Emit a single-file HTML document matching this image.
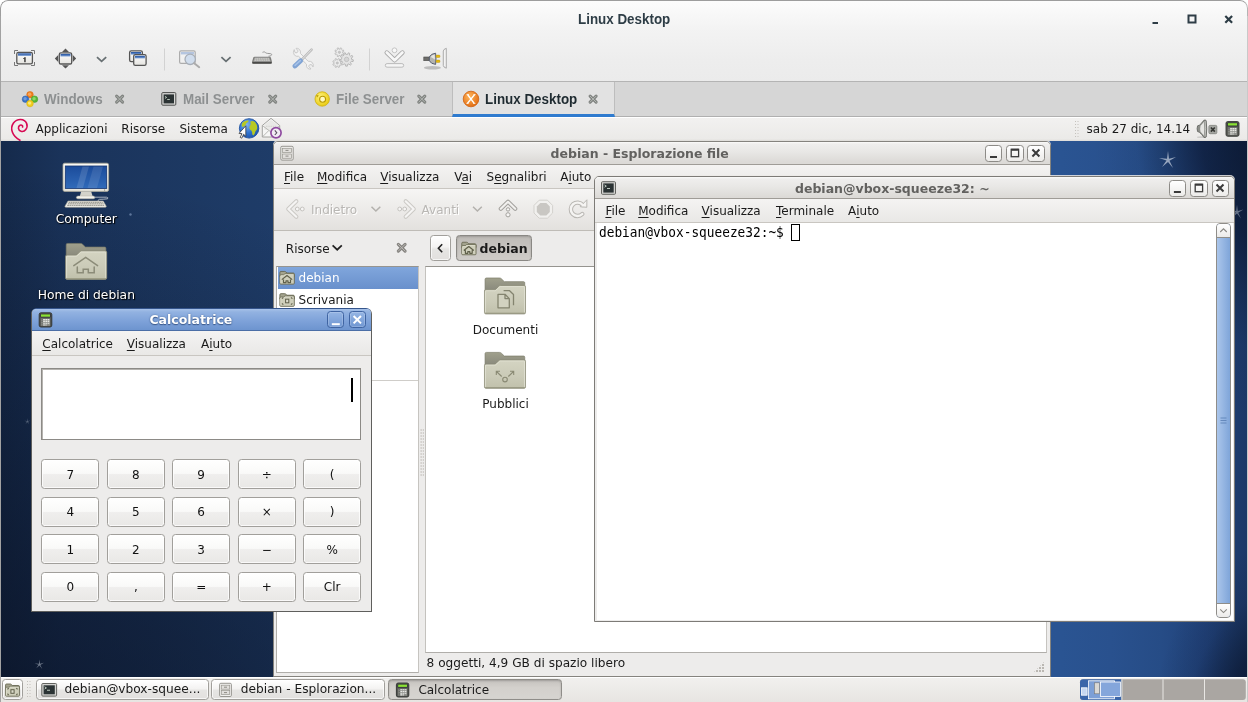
<!DOCTYPE html>
<html><head><meta charset="utf-8"><title>Linux Desktop</title>
<style>
*{box-sizing:border-box;margin:0;padding:0}
html,body{width:1248px;height:702px;overflow:hidden;background:#fff}
body{position:relative;font-family:"DejaVu Sans","Liberation Sans",sans-serif;font-size:12px;color:#1a1a1a;line-height:14px}
.a{position:absolute}
svg{position:absolute;overflow:visible}
u{text-decoration:underline;text-underline-offset:1.5px;text-decoration-thickness:1px}
span{white-space:nowrap}
#chrome{will-change:transform;position:absolute;left:0;top:0;width:1248px;height:702px;border-radius:8px 8px 0 0;overflow:hidden;background:#ededed}
#hdr{position:absolute;left:0;top:0;width:1248px;height:82px;background:linear-gradient(#fcfcfc 0,#f3f3f3 28px,#ededed 60px,#ebebeb 81px);border-top:1px solid #efefef;border-bottom:1px solid #b4b4b4}
.cz{font:bold 14.5px "Liberation Sans",sans-serif;transform:scaleX(.924);transform-origin:0 0;display:inline-block;white-space:nowrap}
#title{position:absolute;left:578px;top:10px;color:#2e3d46}
#tabs{position:absolute;left:0;top:82px;width:1248px;height:35px;background:#d6d6d6;border-bottom:1px solid #b0b0b0}
.tab{position:absolute;top:9.400px;color:#8d9091}
#atab{position:absolute;left:452px;top:0;width:163px;height:35px;background:#e2e2e2;border-left:1px solid #bdbdbd;border-right:1px solid #bdbdbd;border-bottom:3px solid #2f7bcf}
#lb{position:absolute;left:0;top:8px;width:1.300px;height:694px;background:#a2a2a2}
#frame{position:absolute;left:0;top:0;width:1248px;height:16px;border:1.300px solid #9d9d9d;border-bottom:none;border-right-color:#b4b4b4;border-radius:8px 8px 0 0}
#rb{position:absolute;left:1246.600px;top:8px;width:1.400px;height:694px;background:#c9c9c9}
#tpanel{position:absolute;left:1px;top:117px;width:1246px;height:24.5px;background:linear-gradient(#fff 0,#fff 1px,#f2f1f0 1px,#ebeae8 22px,#dad8d4 24.5px)}
#desk{position:absolute;left:1px;top:141px;width:1246px;height:537px;overflow:hidden;
 background:
 radial-gradient(ellipse 200px 330px at 1289px -41px,rgba(5,12,30,.72) 0,rgba(5,12,30,.64) 30%,rgba(5,12,30,.56) 46%,rgba(5,12,30,.26) 64%,rgba(5,12,30,.05) 78%,rgba(5,12,30,0) 100%),
 radial-gradient(ellipse 140px 200px at 1289px 599px,rgba(5,12,30,.8) 0,rgba(5,12,30,.55) 50%,rgba(5,12,30,.13) 76%,rgba(5,12,30,0) 100%),
 radial-gradient(ellipse 780px 640px at -60px 660px,rgba(7,12,26,.74) 0,rgba(7,12,26,.47) 40%,rgba(7,12,26,0) 100%),
 linear-gradient(90deg,#152a4b 0,#1a335a 60px,#1d3963 200px,#1f3d6a 300px,#25498a 600px,#2b5593 1000px,#2a5492 1060px,#29518e 1110px,#264c86 1160px,#21427a 1205px,#1e3c6d 1232px,#1c3968 1246px)}
#bpanel{position:absolute;left:1px;top:677px;width:1246px;height:25px;background:linear-gradient(#fff 0,#fff 1px,#f1f0ee 1px,#e7e5e2 25px)}
.win{position:absolute;background:#edeceb;border:1px solid #85837e;border-radius:5px 5px 0 0;box-shadow:0 -1px 0 rgba(236,234,231,.85)}
.tbar{position:absolute;left:0;top:0;right:0;height:21.5px;border-radius:4px 4px 0 0;background:linear-gradient(#fbfbfa 0,#efeeed 2px,#e8e7e5 10px,#dcdad7 20px);border-bottom:1px solid #9f9c97}
.tbar .t{position:absolute;top:3px;font-weight:bold;font-size:12.500px;color:#62615f}
.wb{position:absolute;top:1.900px;width:17.400px;height:17px;border:1px solid #8d8b87;border-radius:3.5px;background:linear-gradient(#ffffff,#ecebe9)}
.mbar{position:absolute;left:0;right:0;top:22px;height:24px;background:linear-gradient(#f4f3f2,#e9e8e6);border-bottom:1px solid #c9c6c1}
.mbar span{position:absolute;top:4.5px}
.btn{position:absolute;border:1px solid #a19f9b;border-radius:3.5px;background:linear-gradient(#ffffff 0,#f4f3f2 45%,#e6e5e3 55%,#e2e0de 100%);box-shadow:inset 0 0 0 1px rgba(255,255,255,.7)}
.cb{position:absolute;width:58.200px;height:30px;padding-top:.5px;border:1px solid #a19f9b;border-radius:3.500px;background:linear-gradient(#ffffff 0,#f9f9f8 48%,#efeeed 52%,#e9e8e6 100%);box-shadow:inset 0 0 0 1px rgba(255,255,255,.75);text-align:center;line-height:29px;font-size:12px;color:#111}
.dl{position:absolute;color:#fff;text-shadow:1px 1px 1px #000,0 0 2px rgba(0,0,0,.8);text-align:center;font-size:12.3px}
.dis{color:#b9b7b4;text-shadow:1px 1px 0 #fff}
</style></head><body>
<div id="chrome">
<div id="hdr"><span id="title" class="cz">Linux Desktop</span><svg class="a" style="left:1148px;top:10px" width="90" height="18" viewBox="1148 10 90 18">
<rect x="1152.5" y="21" width="5.5" height="2" fill="#2e3d46"/>
<rect x="1188.5" y="14.5" width="7" height="7" fill="none" stroke="#2e3d46" stroke-width="2"/>
<path d="M1225.300 15 L1232.100 21.800 M1232.100 15 L1225.300 21.800" stroke="#2e3d46" stroke-width="2.200" fill="none"/>
</svg></div><svg class="a" style="left:0;top:40px" width="470" height="40" viewBox="0 40 470 40">
<defs>
<linearGradient id="wt" x1="0" y1="0" x2="0" y2="1"><stop offset="0" stop-color="#1f4f9e"/><stop offset="1" stop-color="#7ea1d6"/></linearGradient>
<linearGradient id="wbg" x1="0" y1="0" x2="0" y2="1"><stop offset="0" stop-color="#ffffff"/><stop offset="1" stop-color="#e4e3df"/></linearGradient>
</defs>
<!-- icon1 fullscreen -->
<g>
<path d="M14.5 54 V50.5 H18 M31 50.5 H34.5 V54 M34.5 62 V65.5 H31 M18 65.5 H14.5 V62" fill="none" stroke="#777" stroke-width="1"/>
<rect x="16.8" y="52.3" width="15.6" height="11.6" rx="1.6" fill="url(#wbg)" stroke="#555" stroke-width="1.3"/>
<rect x="18" y="53.3" width="13.2" height="2.6" fill="url(#wt)"/>
<rect x="24.3" y="57.2" width="1.3" height="5" fill="#222"/><rect x="23.4" y="58" width="1" height="1" fill="#222"/>
</g>
<!-- icon2 move -->
<g>
<path d="M65.5 48.6 L69 52 H62 Z M65.5 68.6 L69 65.2 H62 Z M54.8 58.5 L58.2 55 V62 Z M76.2 58.5 L72.8 55 V62 Z" fill="#555"/>
<rect x="59.3" y="52.8" width="12.4" height="11.2" rx="1.6" fill="url(#wbg)" stroke="#555" stroke-width="1.3"/>
<rect x="60.5" y="53.9" width="10" height="2.6" fill="url(#wt)"/>
</g>
<path d="M97 57.2 L101.6 61.4 L106.2 57.2" fill="none" stroke="#687073" stroke-width="1.800"/>
<!-- icon3 windows -->
<g>
<rect x="129.6" y="50.9" width="12.8" height="10.8" rx="1.6" fill="url(#wbg)" stroke="#555" stroke-width="1.3"/>
<rect x="130.8" y="52" width="10.4" height="2.6" fill="url(#wt)"/>
<rect x="133.7" y="54.7" width="12.4" height="10.6" rx="1.6" fill="url(#wbg)" stroke="#555" stroke-width="1.3"/>
<rect x="134.9" y="55.8" width="10" height="2.6" fill="url(#wt)"/>
</g>
<rect x="164" y="48.5" width="1" height="22" fill="#d2d2d2"/>
<!-- icon4 zoom (disabled) -->
<g opacity=".55">
<rect x="179.6" y="50.9" width="15.6" height="12.4" rx="1.4" fill="#f4f4f4" stroke="#777" stroke-width="1.2"/>
<rect x="180.8" y="52" width="13.2" height="2.4" fill="#86a4d4"/>
<circle cx="190.2" cy="59.3" r="5.2" fill="#b9d0ee" stroke="#6f7b8c" stroke-width="1.3"/>
<path d="M194.2 63.3 L199.2 67.2" stroke="#777" stroke-width="2" stroke-linecap="round"/>
</g>
<path d="M221.4 57.2 L226 61.4 L230.6 57.2" fill="none" stroke="#687073" stroke-width="1.800"/>
<!-- keyboard -->
<g>
<path d="M262.500 52.300 C267 50.800 262.500 53.400 270 53.600 C272.800 53.800 272 56.200 268.500 56.200" fill="none" stroke="#909090" stroke-width=".9"/>
<path d="M254.600 56.800 H269.600 Q270.600 56.800 270.900 57.700 L272 62 Q272.200 63.900 270.400 63.900 H253.600 Q251.800 63.900 252 62 L253.200 57.700 Q253.600 56.800 254.600 56.800 Z" fill="#7e7e7c"/>
<path d="M254.800 57.700 H269.300 L270.400 61.300 H253.600 Z" fill="#d4d4d2"/>
<path d="M254.400 58.900 H269.800 M254 60.100 H270.200" stroke="#6f6f6d" stroke-width=".55" stroke-dasharray="1.300 .5"/>
<path d="M252.400 62.700 H271.600" stroke="#4a4a48" stroke-width="1.500"/>
</g>
<!-- tools (disabled look) -->
<g opacity=".75">
<path d="M294.200 49.600 Q292.500 52.500 294.300 55 Q296 56.800 298.600 56.300 L306.500 64.200 Q305.800 66.800 307.600 68.300 Q309.200 69.500 311 69 L308.600 66.200 L309.800 64.600 L311.800 64.800 L313 67 Q314 64.400 312.200 62.400 Q310.500 60.800 308.200 61.300 L300.400 53.400 Q301 50.900 299.200 49.200 Q297.700 48 296 48.300 L298.200 51 L297 52.800 L295 52.600 Z" fill="#f6f6f6" stroke="#bdbdbd" stroke-width="1" stroke-linejoin="round"/>
<path d="M311.600 49.600 L301.600 59.900" stroke="#a8a8a8" stroke-width="2.600" stroke-linecap="round"/>
<path d="M311.600 49.600 L301.600 59.900" stroke="#e4e4e4" stroke-width="1" stroke-linecap="round" stroke-dasharray=".6 .6"/>
<path d="M300.600 60.800 L295 66" stroke="#5d8ccc" stroke-width="4.800" stroke-linecap="round"/>
<path d="M300.300 60.600 L295 65.300" stroke="#8db3e6" stroke-width="1.600" stroke-linecap="round"/>
</g>
<!-- gears (disabled) -->
<g opacity=".8" fill="#ececec" stroke="#b4b4b4" stroke-width="1" stroke-linejoin="round">
<path d="M342.6 52.9 L343.9 53.4 L343.3 54.7 L342.1 54.2 L341.3 55.0 L341.8 56.2 L340.5 56.8 L340.0 55.5 L338.8 55.5 L338.3 56.8 L337.0 56.2 L337.5 55.0 L336.7 54.2 L335.5 54.7 L334.9 53.4 L336.2 52.9 L336.2 51.7 L334.9 51.2 L335.5 49.9 L336.7 50.4 L337.5 49.6 L337.0 48.4 L338.3 47.8 L338.8 49.1 L340.0 49.1 L340.5 47.8 L341.8 48.4 L341.3 49.6 L342.1 50.4 L343.3 49.9 L343.9 51.2 L342.6 51.7 Z"/><path d="M340.5 63.6 L341.8 64.1 L341.2 65.4 L340.0 64.9 L339.2 65.7 L339.7 66.9 L338.4 67.5 L337.9 66.2 L336.7 66.2 L336.2 67.5 L334.9 66.9 L335.4 65.7 L334.6 64.9 L333.4 65.4 L332.8 64.1 L334.1 63.6 L334.1 62.4 L332.8 61.9 L333.4 60.6 L334.6 61.1 L335.4 60.3 L334.9 59.1 L336.2 58.5 L336.7 59.8 L337.9 59.8 L338.4 58.5 L339.7 59.1 L339.2 60.3 L340.0 61.1 L341.2 60.6 L341.8 61.9 L340.5 62.4 Z"/><path d="M351.7 59.5 L353.4 59.9 L353.1 61.6 L351.3 61.3 L350.4 62.8 L351.5 64.2 L350.2 65.2 L349.0 63.9 L347.4 64.4 L347.3 66.2 L345.6 66.1 L345.6 64.4 L343.9 63.8 L342.8 65.0 L341.5 63.9 L342.6 62.6 L341.8 61.0 L340.0 61.2 L339.8 59.6 L341.5 59.3 L341.9 57.5 L340.4 56.6 L341.3 55.2 L342.8 56.0 L344.2 54.9 L343.7 53.3 L345.2 52.7 L345.8 54.4 L347.6 54.4 L348.3 52.8 L349.8 53.4 L349.3 55.0 L350.6 56.2 L352.1 55.4 L352.9 56.9 L351.4 57.8 Z" fill="#e2e2e2" stroke="#a9a9a9"/>
<circle cx="339.400" cy="52.300" r="1.100" fill="#bdbdbd" stroke="#a5a5a5" stroke-width=".6"/>
<circle cx="337.300" cy="63" r="1.100" fill="#bdbdbd" stroke="#a5a5a5" stroke-width=".6"/>
<circle cx="346.600" cy="59.400" r="2.200" fill="#d0d0d0" stroke="#b0b0b0" stroke-width=".8"/>
</g>
<rect x="369" y="48.5" width="1" height="22" fill="#d2d2d2"/>
<!-- download -->
<g>
<path d="M386.800 52.600 L394.600 60.200 L402.400 52.600" fill="none" stroke="#a9a9a9" stroke-width="4.600" stroke-linecap="round" stroke-linejoin="round"/>
<path d="M386.800 52.600 L394.600 60.200 L402.400 52.600" fill="none" stroke="#f7f7f7" stroke-width="2.800" stroke-linecap="round" stroke-linejoin="round"/>
<circle cx="394.500" cy="50.300" r="2.400" fill="#f8f8f8" stroke="#c0c0c0" stroke-width=".9"/>
<rect x="385.300" y="63.600" width="18.400" height="3.600" rx="1.800" fill="#f5f5f5" stroke="#b4b4b4" stroke-width=".9"/>
</g>
<!-- plug -->
<g>
<ellipse cx="432.400" cy="67.800" rx="8.500" ry="1.700" fill="#000" opacity=".2"/>
<rect x="423.800" y="57" width="6" height="3.700" fill="#6d6d6a" stroke="#4a4a48" stroke-width=".6"/>
<path d="M429.300 57 Q431 53.600 435.600 53.200 Q436.400 58.800 435.600 64.400 Q431 64 429.300 60.700 Z" fill="#b3b3af" stroke="#4c5468" stroke-width=".9" stroke-linejoin="round"/>
<path d="M430.600 57 Q432 54.800 434.600 54.400 Q435 57 434.800 59.500 Q432.500 57.500 430.600 57 Z" fill="#e6e6e3"/>
<rect x="436" y="55.100" width="4" height="2.400" rx=".9" fill="#e5ba14" stroke="#b08c08" stroke-width=".4"/>
<rect x="436" y="60.100" width="4" height="2.400" rx=".9" fill="#e5ba14" stroke="#b08c08" stroke-width=".4"/>
<path d="M443.300 51 Q443.300 49.300 446.300 48.300 V68.200 Q443.300 67.200 443.300 65.500 Z" fill="#f3f3f3" stroke="#9a9a9a" stroke-width=".8" stroke-linejoin="round"/>
</g>
</svg><div id="tabs"><div id="atab"></div><span class="tab cz" style="left:44px">Windows</span><span class="tab cz" style="left:182.5px">Mail Server</span><span class="tab cz" style="left:336px">File Server</span><span class="tab cz" style="left:485px;color:#1f2b31">Linux Desktop</span><svg class="a" style="left:0;top:0" width="640" height="35" viewBox="0 82 640 35">
<defs>
<radialGradient id="og" cx=".4" cy=".35" r=".7"><stop offset="0" stop-color="#ffb65c"/><stop offset="1" stop-color="#e06a10"/></radialGradient>
<radialGradient id="yg" cx=".4" cy=".35" r=".7"><stop offset="0" stop-color="#fff27a"/><stop offset="1" stop-color="#e8c90c"/></radialGradient>
</defs>
<!-- windows flower -->
<circle cx="30" cy="94.700" r="3.300" fill="#ee7d1c" stroke="#d96c12" stroke-width=".5"/><circle cx="29.600" cy="94.200" r="1.700" fill="#f7a65a"/>
<circle cx="25.500" cy="99.200" r="3.300" fill="#3a72c4" stroke="#2f62ae" stroke-width=".5"/><circle cx="25.100" cy="98.700" r="1.700" fill="#6d9be0"/>
<circle cx="34.500" cy="99.200" r="3.300" fill="#56b535" stroke="#449f27" stroke-width=".5"/><circle cx="34.100" cy="98.700" r="1.700" fill="#8ad86b"/>
<circle cx="30" cy="103.600" r="3.300" fill="#f0cc1e" stroke="#d4b012" stroke-width=".5"/><circle cx="29.600" cy="103.100" r="1.700" fill="#fbe776"/>
<!-- terminal icon -->
<rect x="161.800" y="92.600" width="14" height="12.600" rx="1" fill="#d6d6d4" stroke="#4a4c4a" stroke-width="1"/>
<rect x="163.600" y="94.400" width="10.400" height="9" fill="#2b3334"/>
<path d="M165 96.400 l1.600 1 l-1.600 1" stroke="#d8e8d8" stroke-width=".8" fill="none"/><rect x="167.200" y="99" width="2.600" height=".8" fill="#d8e8d8"/>
<!-- file server -->
<circle cx="322.2" cy="99" r="7.2" fill="url(#yg)" stroke="#cfae08" stroke-width=".8"/>
<circle cx="322.6" cy="99.2" r="3" fill="#fff9c0" stroke="#b99a05" stroke-width="1.1"/>
<path d="M316.2 95 l2.6 .4 l-1.8 2.2 z" fill="#b99a05"/>
<!-- X icon -->
<circle cx="471" cy="99" r="7.8" fill="url(#og)" stroke="#d0600c" stroke-width=".8"/>
<path d="M467.6 94.6 L474.2 103.4 M474.6 94.6 L467.4 103.4" stroke="#fff" stroke-width="1.5" fill="none"/>
<path d="M466.6 94.6 H469 M473.4 94.6 H475.6 M466.4 103.4 H468.6 M473.2 103.4 H475.4" stroke="#fff" stroke-width=".8"/>
<!-- close Xs -->
<g stroke="#808380" stroke-width="3.100" stroke-linecap="round" fill="none">
<path d="M116.600 96.100 l6 6 m0 -6 l-6 6"/>
<path d="M269.700 96.100 l6 6 m0 -6 l-6 6"/>
<path d="M418.800 96.100 l6 6 m0 -6 l-6 6"/>
<path d="M590.100 96.100 l6 6 m0 -6 l-6 6"/>
</g>
<g stroke="#b3b7b3" stroke-width="1" stroke-linecap="round" fill="none">
<path d="M116.600 96.100 l6 6 m0 -6 l-6 6"/>
<path d="M269.700 96.100 l6 6 m0 -6 l-6 6"/>
<path d="M418.800 96.100 l6 6 m0 -6 l-6 6"/>
<path d="M590.100 96.100 l6 6 m0 -6 l-6 6"/>
</g>
</svg></div><div id="tpanel"><span class="a" style="left:34.5px;top:5.300px">Applicazioni</span><span class="a" style="left:120.3px;top:5.300px">Risorse</span><span class="a" style="left:178.5px;top:5.300px">Sistema</span><span class="a" style="left:1085.6px;top:5.300px">sab 27 dic, 14.14</span><svg class="a" style="left:0;top:0" width="1246" height="25" viewBox="1 117 1246 25">
<defs>
<radialGradient id="gl" cx=".38" cy=".3" r=".8"><stop offset="0" stop-color="#7fb2ee"/><stop offset=".55" stop-color="#2f72cf"/><stop offset="1" stop-color="#1c4fa6"/></radialGradient>
</defs>
<!-- debian swirl -->
<path d="M20 140.2 C12.5 136.5 9.5 128.5 13.5 123 C17 118.3 24.5 118.2 26.6 123.4 C28.4 128 24.6 132.4 21 131.2 C18 130.2 17.6 126.4 20 125.2 C21.6 124.5 23 125.6 22.6 127" fill="none" stroke="#d70a53" stroke-width="1.6" stroke-linecap="round"/>
<!-- globe -->
<circle cx="249.100" cy="128.400" r="9.700" fill="url(#gl)" stroke="#1d4f9e" stroke-width=".9"/>
<path d="M250.300 121.600 Q252.500 120.300 255 122 Q257.300 124.500 257.300 128 Q256.800 130.500 255.300 131.500 Q255 134 253.300 135.600 Q252 135 252.200 132.500 Q251.800 130.600 250.300 129.800 Q248.800 128 249.800 126 Q251.300 124.800 250.300 121.600 Z" fill="#b7c923"/>
<path d="M242.300 122.800 Q244.500 120.300 248.300 120.200 Q249 121.800 247.300 122.600 Q245.800 123.300 245.500 125.300 Q243.800 127 242 126.800 Q241.300 124.800 242.300 122.800 Z" fill="#b7c923"/>
<path d="M245.800 125.800 L245.800 136.300 L243.600 134.300 L241.800 138.200 L240.200 137.400 L242 133.700 L239 133.400 Z" fill="#fff" stroke="#3a3a3a" stroke-width=".8" stroke-linejoin="round"/>
<!-- mail -->
<path d="M262.300 125.500 L271 118.300 L279.700 125.500 V137 H262.300 Z" fill="#f6f6f5" stroke="#9a9a96" stroke-width=".9" stroke-linejoin="round"/>
<path d="M264.300 124.800 L271 120 L277.700 124.800 V130 H264.300 Z" fill="#e9e9e7"/>
<path d="M262.300 125.500 L271 132 L279.700 125.500 M262.500 136.800 L268.800 130.500 M279.500 136.800 L273.200 130.500" fill="none" stroke="#aaa9a5" stroke-width=".8"/>
<path d="M266 126.300 h10" stroke="#c4c4c0" stroke-width=".6" stroke-dasharray="1.500 .8"/>
<circle cx="276" cy="132.800" r="5.100" fill="#f2ecf5" stroke="#8f4aa0" stroke-width="1.700"/>
<path d="M274.800 130.300 L276.800 132.800 L274.800 135" stroke="#5a5060" stroke-width="1.100" fill="none"/>
<!-- handle -->
<g fill="#c4c1bc"><rect x="1075" y="121" width="1" height="1"/><rect x="1077.500" y="121" width="1" height="1"/><rect x="1075" y="124" width="1" height="1"/><rect x="1077.500" y="124" width="1" height="1"/><rect x="1075" y="127" width="1" height="1"/><rect x="1077.500" y="127" width="1" height="1"/><rect x="1075" y="130" width="1" height="1"/><rect x="1077.500" y="130" width="1" height="1"/><rect x="1075" y="133" width="1" height="1"/><rect x="1077.500" y="133" width="1" height="1"/><rect x="1075" y="136" width="1" height="1"/><rect x="1077.500" y="136" width="1" height="1"/></g>
<!-- speaker -->
<ellipse cx="1201" cy="137.200" rx="4" ry=".9" fill="#000" opacity=".12"/>
<path d="M1197.600 125.800 Q1196.600 128.700 1197.600 131.600 L1199.400 132.200 Q1202 134.500 1203.800 137.300 Q1205.300 138 1206.200 137 Q1207.300 128.700 1206.200 120.600 Q1205.300 119.600 1203.800 120.300 Q1202 123 1199.400 125.200 Z" fill="#8d8f8a" stroke="#5d5f5a" stroke-width=".8" stroke-linejoin="round"/>
<path d="M1200.500 125.800 Q1202.600 123.800 1203.800 121.800 Q1204.800 128.700 1203.800 135.800 Q1202.600 133.800 1200.500 131.800 Q1199.800 128.700 1200.500 125.800 Z" fill="#e6e6e3"/>
<path d="M1205.100 121 Q1206 128.700 1205.100 136.600" stroke="#c9cac6" stroke-width=".9" fill="none"/>
<rect x="1208.900" y="125.400" width="7.900" height="8.300" rx="1.200" fill="#a6a8a3" stroke="#858782" stroke-width=".9"/>
<path d="M1210.900 127.500 l3.900 4.100 m0 -4.100 l-3.900 4.100" stroke="#353734" stroke-width="1.700"/>
<!-- calc icon -->
<rect x="1226" y="121.500" width="13" height="14.800" rx="1.800" fill="#575955" stroke="#3a3c39" stroke-width=".9"/>
<rect x="1227" y="122.500" width="11" height="4" rx=".8" fill="#34373a"/>
<rect x="1227.900" y="123.200" width="9.200" height="2.300" fill="#8ae234"/>
<rect x="1227.900" y="127.600" width="9.200" height="7.400" fill="#8f918c"/>
<path d="M1230.200 128.600 h6.300 M1230.200 130.400 h6.300 M1230.200 132.200 h6.300 M1230.200 134 h3.400" stroke="#e6e7e3" stroke-width="1.100" stroke-dasharray="1.700 .5"/>
<path d="M1228.400 128.600 h1.100 M1228.400 130.400 h1.100 M1228.400 132.200 h1.100 M1228.400 134 h1.100" stroke="#5b5d58" stroke-width="1.100"/>
</svg></div><div id="desk"><div class="a" style="left:-1px;top:-141px;width:1248px;height:702px"><svg width="0" height="0" style="left:0;top:0"><defs>
<linearGradient id="ff" x1="0" y1="0" x2="0" y2="1"><stop offset="0" stop-color="#d4d4c2"/><stop offset=".6" stop-color="#cacab7"/><stop offset="1" stop-color="#c0c0ab"/></linearGradient>
<linearGradient id="fb" x1="0" y1="0" x2="0" y2="1"><stop offset="0" stop-color="#a0a08c"/><stop offset="1" stop-color="#86867a"/></linearGradient>
<symbol id="folder" viewBox="0 0 42 38" overflow="visible">
 <path d="M.8 2 Q.8 .6 2.200 .6 H15.500 Q16.500 .6 17.300 1.400 L20.300 4.300 H39.800 Q41 4.300 41 5.500 V15 H.8 Z" fill="url(#fb)" stroke="#7b7b68" stroke-width=".7"/>
 <path d="M.2 13.800 Q.2 12.500 1.500 12.500 H10.300 Q11.200 12.500 11.900 11.800 L14.600 9 Q15.300 8.300 16.200 8.300 H40.500 Q41.800 8.300 41.800 9.600 V35.600 Q41.800 37 40.400 37 H1.600 Q.2 37 .2 35.600 Z" fill="url(#ff)" stroke="#8a8a76" stroke-width=".8"/>
 <path d="M1.200 35.500 V14.200 Q1.200 13.500 1.900 13.500 H10.800 Q11.500 13.500 12.200 12.800 L15 10 Q15.700 9.300 16.400 9.300 H40 Q40.800 9.300 40.800 10 V35.500" fill="none" stroke="#e6e6d8" stroke-width=".8" opacity=".9"/>
 <path d="M1 36.300 H41" stroke="#96967f" stroke-width="1"/>
</symbol>
<symbol id="sfolder" viewBox="0 0 16 14" overflow="visible">
 <path d="M.6 1.600 Q.6 .5 1.700 .5 H5.600 Q6.300 .5 6.800 1 L7.800 2.100 H14.300 Q15.400 2.100 15.400 3.200 V6 H.6 Z" fill="#a3a38e" stroke="#66664f" stroke-width=".9"/>
 <path d="M.6 5 Q.6 4 1.600 4 H4.300 L5.800 2.900 H14.400 Q15.400 2.900 15.400 3.900 V12.500 Q15.400 13.500 14.400 13.500 H1.600 Q.6 13.500 .6 12.500 Z" fill="#cfcfbb" stroke="#66664f" stroke-width=".9"/>
 <path d="M1.500 12.600 V5.200 Q1.500 4.900 1.800 4.900 H4.600 L6.100 3.800 H14.200 Q14.500 3.800 14.500 4.100" fill="none" stroke="#e4e4d4" stroke-width=".7"/>
</symbol>
<symbol id="star" viewBox="-10 -10 20 20" overflow="visible">
 <path d="M0 -9 L1 -1.200 L8 -3 L1.500 .8 L5 8 L0 2 L-6 7 L-1.500 .5 L-9 -2 L-1 -1.200 Z" fill="#e6ecf5"/>
</symbol>
</defs></svg><svg style="left:0;top:0" width="1248" height="702" viewBox="0 0 1248 702">
<use href="#star" x="1158" y="150" width="20" height="20" opacity=".6"/>
<use href="#star" x="1229" y="204" width="16" height="16" opacity=".4"/>
<use href="#star" x="34" y="659" width="11" height="11" opacity=".45"/>
<use href="#star" x="24" y="418" width="7" height="7" opacity=".3"/>
<circle cx="130.500" cy="214.500" r="1.200" fill="#6f87ab" opacity=".8"/>
</svg><svg style="left:0;top:0" width="300" height="320" viewBox="0 0 300 320">
<defs>
<linearGradient id="scr" x1="0" y1="0" x2="0" y2="1"><stop offset="0" stop-color="#1b4b9a"/><stop offset="1" stop-color="#316bba"/></linearGradient>
<linearGradient id="mon" x1="0" y1="0" x2="0" y2="1"><stop offset="0" stop-color="#fbfaf5"/><stop offset="1" stop-color="#e6e4da"/></linearGradient>
</defs>
<!-- computer -->
<rect x="63" y="163.200" width="45.600" height="28.200" rx="1.600" fill="url(#mon)" stroke="#a9a798" stroke-width=".8"/>
<rect x="65.300" y="166" width="41.400" height="22.400" fill="url(#scr)" stroke="#12336f" stroke-width=".8"/>
<path d="M82.500 166.500 L89 166.500 L83 188 L76.500 188 Z" fill="#fff" opacity=".13"/>
<path d="M93.500 166.500 L103 166.500 L97 188 L87.500 188 Z" fill="#fff" opacity=".1"/>
<circle cx="104.600" cy="190" r=".6" fill="#6a6a60"/>
<path d="M81.200 191.600 H91.200 L92.600 196.300 H79.800 Z" fill="#d3d2ca"/>
<path d="M78 196 H93.200 Q94.800 196 94.800 197.500 Q94.800 198.800 93.200 198.800 H78 Q76.400 198.800 76.400 197.500 Q76.400 196 78 196Z" fill="#f2f1ea" stroke="#b5b3a5" stroke-width=".5"/>
<path d="M95 197.200 H106.500 Q108.600 197.500 107.500 198.800 Q104 199.300 99.500 199.300 Q98 199.500 98 201.300" fill="none" stroke="#b9c0c9" stroke-width=".9"/>
<path d="M68 201 H103.200 L106.300 206.300 Q106.300 207.300 105.300 207.300 H65.900 Q64.900 207.300 64.900 206.300 Z" fill="#f1f0e9" stroke="#a5a396" stroke-width=".6"/>
<path d="M68.600 202.300 H102.800 M67.900 203.800 H103.700 M67.200 205.300 H104.600" stroke="#8f8e85" stroke-width="1" stroke-dasharray="1.800 .4"/>
<!-- home folder -->
<use href="#folder" x="65.400" y="242.600" width="41.500" height="38"/>
<path d="M73.800 265.600 L85.700 257.500 L97.600 265.600 M77.300 267 V272.800 H83.200 V269.300 H88.300 V272.800 H94.200 V267" fill="none" stroke="#8b8b78" stroke-width="1.500" stroke-linejoin="miter" stroke-linecap="round"/>
</svg><div class="dl" style="left:25.300px;top:211.500px;width:122px">Computer</div><div class="dl" style="left:25.300px;top:288px;width:122px">Home di debian</div><div class="win" style="left:273px;top:141px;width:778px;height:535.500px"><div class="tbar" style="height:23px"><span class="t" style="left:276.6px;top:4.500px">debian - Esplorazione file</span><div class="wb" style="left:711.0px;top:2.900px"></div><div class="wb" style="left:732.2px;top:2.900px"></div><div class="wb" style="left:753.4px;top:2.900px"></div><svg style="left:0;top:0" width="778" height="22" viewBox="274 142 778 22">
<rect x="280.800" y="146.300" width="12.400" height="13.800" rx="1.200" fill="#f1f0ee" stroke="#8f8d88" stroke-width=".9"/>
<rect x="282.600" y="148.300" width="8.800" height="4.300" fill="#e1dfdc" stroke="#98968f" stroke-width=".7"/>
<rect x="282.600" y="154" width="8.800" height="4.300" fill="#e1dfdc" stroke="#98968f" stroke-width=".7"/>
<path d="M285.500 150.400 h3 M285.500 156.100 h3" stroke="#77756f" stroke-width=".8"/>
<g stroke="#3a3a3a" fill="none">
<path d="M990 157 h7" stroke-width="2"/>
<rect x="1011.200" y="149.300" width="7.400" height="7.400" stroke-width="1.300"/><path d="M1011.200 149.800 h7.400" stroke-width="2"/>
<path d="M1032.400 149.500 l7 7 m0 -7 l-7 7" stroke-width="2"/>
</g></svg></div><div class="mbar" style="top:23px;height:24px"><span style="left:10.0px"><u>F</u>ile</span><span style="left:43.0px"><u>M</u>odifica</span><span style="left:106.2px"><u>V</u>isualizza</span><span style="left:180.2px">V<u>a</u>i</span><span style="left:212.5px">S<u>e</u>gnalibri</span><span style="left:286.2px">A<u>i</u>uto</span></div><div class="a" style="left:0;right:0;top:47px;height:41.500px;background:linear-gradient(#f6f5f4,#e3e1de);border-bottom:1px solid #bfbcb7"></div><span class="a dis" style="left:37.0px;top:60.6px">Indietro</span><span class="a dis" style="left:147.6px;top:60.6px">Avanti</span><svg style="left:0;top:47px" width="330" height="42" viewBox="274 189 330 42">
<g fill="none" stroke-linejoin="round" stroke-linecap="round">
<path d="M296.300 201.300 L288.300 209 L296.300 216.700" stroke="#cbc9c5" stroke-width="4.200"/>
<path d="M296.300 201.300 L288.300 209 L296.300 216.700" stroke="#f5f4f3" stroke-width="2.200"/>
<path d="M405.700 201.300 L413.700 209 L405.700 216.700" stroke="#cbc9c5" stroke-width="4.200"/>
<path d="M405.700 201.300 L413.700 209 L405.700 216.700" stroke="#f5f4f3" stroke-width="2.200"/>
<path d="M500.800 208.800 L508 201.800 L515.200 208.800" stroke="#a3a19d" stroke-width="4.200"/>
<path d="M500.800 208.800 L508 201.800 L515.200 208.800" stroke="#f1f0ee" stroke-width="2.200"/>
</g>
<g fill="#f6f5f4" stroke="#c4c2be" stroke-width="1">
<circle cx="297.300" cy="209" r="1.900"/><circle cx="302.300" cy="209" r="1.900"/>
<circle cx="404.700" cy="209" r="1.900"/><circle cx="399.700" cy="209" r="1.900"/>
<circle cx="508" cy="209.400" r="1.700" stroke="#a3a19d"/><circle cx="508" cy="214.800" r="2.100" stroke="#a3a19d"/>
</g>
<path d="M371.500 206.800 l4.400 4.200 l4.400 -4.200 M473 206.800 l4.400 4.200 l4.400 -4.200" fill="none" stroke="#b3b1ad" stroke-width="1.500"/>
<path d="M539.200 200.200 H547.400 L552.600 205.400 V213 L547.400 218.200 H539.200 L534 213 V205.400 Z" fill="#f1f0ee" stroke="#d3d1cd" stroke-width="1"/>
<path d="M540.300 203 H546.300 L549.800 206.500 V211.900 L546.300 215.400 H540.300 L536.800 211.900 V206.500 Z" fill="#c9c7c3"/>
<path d="M582.700 205 A6.700 6.700 0 1 0 582.300 214" fill="none" stroke="#b9b7b3" stroke-width="4.400" stroke-linecap="round"/>
<path d="M580.200 206.700 L586.800 207.300 L586.900 199.800 Z" fill="#f5f4f2" stroke="#b9b7b3" stroke-width="1" stroke-linejoin="round"/>
<path d="M582.700 205 A6.700 6.700 0 1 0 582.300 214" fill="none" stroke="#f5f4f2" stroke-width="2.400" stroke-linecap="round"/>
</svg><span class="a" style="left:11.8px;top:99.6px">Risorse</span><svg style="left:0;top:89px" width="270" height="36" viewBox="274 231 270 36">
<path d="M332.600 245.300 l4.600 4.400 l4.600 -4.400" fill="none" stroke="#222" stroke-width="1.700"/>
<path d="M398.300 244.300 l6.800 6.800 m0 -6.800 l-6.800 6.800" stroke="#868480" stroke-width="3.100" stroke-linecap="round"/>
<path d="M398.300 244.300 l6.800 6.800 m0 -6.800 l-6.800 6.800" stroke="#b9b7b3" stroke-width="1" stroke-linecap="round"/>
</svg><div class="btn" style="left:155.8px;top:93.3px;width:21.400px;height:26px"></div><div class="btn" style="left:181.6px;top:93.3px;width:76.200px;height:26px;background:linear-gradient(#bebbb7,#cfccc8);border-color:#8a8884;box-shadow:inset 0 1px 2px rgba(0,0,0,.18)"></div><span class="a" style="left:205.6px;top:100.3px;font-weight:bold;font-size:12.500px">debian</span><svg style="left:0;top:89px" width="270" height="36" viewBox="274 231 270 36">
<path d="M442.200 244.200 l-3.800 4 l3.800 4" fill="none" stroke="#222" stroke-width="1.600"/>
<use href="#sfolder" x="461.200" y="241.600" width="15.400" height="13.800"/>
<path d="M463.800 250.500 L468.800 246.500 L473.800 250.500 M465.400 250.300 V253.300 H467.800 V251.600 H469.800 V253.300 H472.200 V250.300" fill="none" stroke="#5f5f4a" stroke-width="1.200" stroke-linejoin="round"/>
</svg><div class="a" style="left:2.0px;top:123.7px;width:143px;height:407px;background:#fff;border:1px solid;border-color:#96948f #c6c4c0 #b0aeaa #b0aeaa"></div><div class="a" style="left:3.5px;top:124.7px;width:140.500px;height:22px;background:linear-gradient(#80a6dc,#6990cc)"></div><span class="a" style="left:24.6px;top:128.6px;color:#fff">debian</span><span class="a" style="left:24.6px;top:150.8px">Scrivania</span><svg style="left:0;top:124px" width="150" height="50" viewBox="274 266 150 50">
<use href="#sfolder" x="279.300" y="270.800" width="15.600" height="14"/>
<path d="M281.800 279.600 L287 275.500 L292.200 279.600 M283.500 279.400 V282.600 H286 V280.800 H288 V282.600 H290.500 V279.400" fill="none" stroke="#5f5f4a" stroke-width="1.200" stroke-linejoin="round"/>
<use href="#sfolder" x="279.300" y="293" width="15.600" height="14"/>
<rect x="285.600" y="299.200" width="3.200" height="3.600" fill="#dcdccc" stroke="#5f5f4a" stroke-width="1"/><path d="M282.300 297.800 h1.200 M282.300 297.800 v1.200 M292 297.800 h-1.200 M292 297.800 v1.200 M282.300 304.300 h1.200 M282.300 304.300 v-1.200 M292 304.300 h-1.200 M292 304.300 v-1.200" stroke="#5f5f4a" stroke-width=".9"/>
</svg><div class="a" style="left:3.5px;top:237.6px;width:140.500px;height:1px;background:#cfcdc9"></div><div class="a" style="left:146.4px;top:286.5px;width:4px;height:48px;background:radial-gradient(circle at 1px 1px,#c9c6c2 .55px,transparent .9px) 0 0/2.500px 3px"></div><div class="a" style="left:150.8px;top:123.7px;width:622.400px;height:387px;background:#fff;border:1px solid;border-color:#96948f #c6c4c0 #b0aeaa #c4c2be"></div><svg style="left:150px;top:124px" width="200" height="150" viewBox="424 266 200 150">
<use href="#folder" x="484" y="277.400" width="42" height="37.500"/>
<g fill="none" stroke="#84846f" stroke-width="1.300" stroke-linejoin="round">
<path d="M503.600 290.700 H509.600 L513.500 294.500 V305.300"/><path d="M498 294.300 H505 L509.300 298.600 V307.800 H498 Z M505 294.300 V298.600 H509.300" fill="#d2d2c0"/>
</g>
<use href="#folder" x="484" y="351.800" width="42" height="37.500"/>
<g fill="none" stroke="#8a8a74" stroke-width="1.100">
<circle cx="505" cy="379.600" r="2.300"/>
<path d="M501.700 376.500 L496.500 371.500 M496.300 375 V371.300 H500 M508.300 376.500 L513.500 371.500 M513.700 375 V371.300 H510"/>
</g>
</svg><div class="a" style="left:181.0px;top:181.2px;width:101px;text-align:center">Documenti</div><div class="a" style="left:181.0px;top:255.2px;width:101px;text-align:center">Pubblici</div><span class="a" style="left:152.6px;top:513.8px;font-size:12.130px">8 oggetti, 4,9 GB di spazio libero</span><div class="a" style="left:759.0px;top:519.0px;width:12px;height:12px;background:radial-gradient(circle at 1px 1px,#bab7b2 .8px,transparent 1px) 0 0/3px 3px;clip-path:polygon(100% 0,100% 100%,0 100%)"></div></div><div class="win" style="left:594px;top:176px;width:641px;height:446px;border-radius:5px 5px 0 0;border-color:#7d7b77"><div class="tbar" style="height:22px"><span class="t" style="left:200.0px;top:5px">debian@vbox-squeeze32: ~</span><div class="wb" style="left:573.9px;top:2.800px"></div><div class="wb" style="left:595.2px;top:2.800px"></div><div class="wb" style="left:616.5px;top:2.800px"></div><svg style="left:0;top:0" width="640" height="22" viewBox="595 177 640 22">
<rect x="601.500" y="181.700" width="14" height="12.600" rx="1" fill="#d3d3d0" stroke="#62635f" stroke-width="1"/>
<rect x="603.300" y="183.400" width="10.400" height="9.200" fill="#2b3334"/>
<path d="M604.500 185 l1.800 1.100 l-1.800 1.100" stroke="#e0eee0" stroke-width=".8" fill="none"/><rect x="607" y="188" width="3" height=".8" fill="#e0eee0"/>
<g stroke="#3a3a3a" fill="none">
<path d="M1173.900 192 h7" stroke-width="2"/>
<rect x="1195.200" y="184.300" width="7.400" height="7.400" stroke-width="1.300"/><path d="M1195.200 184.800 h7.400" stroke-width="2"/>
<path d="M1216.500 184.500 l7 7 m0 -7 l-7 7" stroke-width="2"/>
</g></svg></div><div class="mbar" style="height:23.500px"><span style="left:10.4px;top:5px"><u>F</u>ile</span><span style="left:43.2px;top:5px"><u>M</u>odifica</span><span style="left:106.6px;top:5px"><u>V</u>isualizza</span><span style="left:181.0px;top:5px"><u>T</u>erminale</span><span style="left:253.0px;top:5px">A<u>i</u>uto</span></div><div class="a" style="left:2px;top:46.0px;right:1px;height:396.6px;background:#fff"></div><span class="a" style="left:4.0px;top:47.7px;font-family:'DejaVu Sans Mono','Liberation Mono',monospace;font-size:13.400px;line-height:16px;color:#000;display:inline-block;transform:scaleX(.955);transform-origin:0 0">debian@vbox-squeeze32:~$</span><div class="a" style="left:195.8px;top:46.6px;width:9.400px;height:17.800px;border:1px solid #000"></div><div class="a" style="left:621.2px;top:46.3px;width:14.600px;height:394.600px;border:1px solid #8f8d89;border-radius:4px;background:linear-gradient(90deg,#abc6eb,#7fa5d9);overflow:hidden"><div class="a" style="left:0;top:0;width:100%;height:13.500px;background:linear-gradient(#fff,#ecebe9);border-bottom:1px solid #8f8d89"></div><div class="a" style="left:0;bottom:0;width:100%;height:13.500px;background:linear-gradient(#fff,#ecebe9);border-top:1px solid #8f8d89"></div></div><svg style="left:615px;top:40px" width="24" height="405" viewBox="1210 217 24 405">
<path d="M1220.200 232 l3.300 -3.200 l3.300 3.200" fill="none" stroke="#8a8884" stroke-width="1.100"/>
<path d="M1220.200 609.400 l3.300 3.200 l3.300 -3.200" fill="none" stroke="#8a8884" stroke-width="1.100"/>
<path d="M1220.500 418 h6 M1220.500 420.500 h6 M1220.500 423 h6" stroke="#5f83b8" stroke-width=".9"/>
</svg></div><div class="win" style="left:31px;top:308px;width:341px;height:303.800px;border-color:#35558c #5f5f5d #5f5f5d #5f5f5d;border-radius:6px 6px 0 0;box-shadow:none"><div class="tbar" style="background:linear-gradient(#a6c1e8 0,#92b2e1 3px,#7ea2d9 12px,#6d94cf 21px);border-bottom:1px solid #4b6ea6;height:22px"><span class="t" style="left:117.4px;top:4.400px;color:#fff;text-shadow:0 1px 1px #3c5a8c,0 0 2px #4f6f9f">Calcolatrice</span><div class="wb" style="left:295.0px;top:2.200px;background:linear-gradient(#95b5e4,#7097d2);border-color:#3f64a2;box-shadow:inset 0 0 0 1px rgba(255,255,255,.18)"></div><div class="wb" style="left:316.6px;top:2.200px;background:linear-gradient(#95b5e4,#7097d2);border-color:#3f64a2;box-shadow:inset 0 0 0 1px rgba(255,255,255,.18)"></div><svg style="left:0;top:0" width="340" height="22" viewBox="32 309 340 22">
<rect x="39.200" y="312.800" width="12.600" height="14.200" rx="1.800" fill="#575955" stroke="#2e302d" stroke-width=".9"/>
<rect x="40.200" y="313.800" width="10.600" height="3.800" rx=".8" fill="#34373a"/>
<rect x="41" y="314.400" width="9" height="2.300" fill="#8ae234"/>
<rect x="41" y="318.600" width="9" height="7.200" fill="#8f918c"/>
<path d="M43.200 319.600 h6.200 M43.200 321.400 h6.200 M43.200 323.200 h6.200 M43.200 325 h3.400" stroke="#e6e7e3" stroke-width="1.100" stroke-dasharray="1.700 .5"/>
<path d="M41.500 319.600 h1.100 M41.500 321.400 h1.100 M41.500 323.200 h1.100 M41.500 325 h1.100" stroke="#5b5d58" stroke-width="1.100"/>
<g stroke="#fff" fill="none">
<path d="M331.800 324.200 h8" stroke-width="2"/>
<path d="M353.600 316 l7.400 7.400 m0 -7.400 l-7.400 7.400" stroke-width="2"/>
</g></svg></div><div class="mbar" style="top:22px;height:24.600px"><span style="left:10.3px;top:6px"><u>C</u>alcolatrice</span><span style="left:94.8px;top:6px"><u>V</u>isualizza</span><span style="left:169.0px;top:6px">A<u>i</u>uto</span></div><div class="a" style="left:9.3px;top:59.2px;width:319.800px;height:72.300px;background:#fff;border:1px solid #8c8a86;box-shadow:inset 1px 1px 0 #b5b3af"></div><div class="a" style="left:319.3px;top:68.6px;width:1.300px;height:24.800px;background:#000"></div><div class="cb" style="left:9.2px;top:150.2px">7</div><div class="cb" style="left:74.8px;top:150.2px">8</div><div class="cb" style="left:140.1px;top:150.2px">9</div><div class="cb" style="left:205.8px;top:150.2px">÷</div><div class="cb" style="left:271.1px;top:150.2px">(</div><div class="cb" style="left:9.2px;top:187.8px">4</div><div class="cb" style="left:74.8px;top:187.8px">5</div><div class="cb" style="left:140.1px;top:187.8px">6</div><div class="cb" style="left:205.8px;top:187.8px">×</div><div class="cb" style="left:271.1px;top:187.8px">)</div><div class="cb" style="left:9.2px;top:225.2px">1</div><div class="cb" style="left:74.8px;top:225.2px">2</div><div class="cb" style="left:140.1px;top:225.2px">3</div><div class="cb" style="left:205.8px;top:225.2px">−</div><div class="cb" style="left:271.1px;top:225.2px">%</div><div class="cb" style="left:9.2px;top:262.8px">0</div><div class="cb" style="left:74.8px;top:262.8px">,</div><div class="cb" style="left:140.1px;top:262.8px">=</div><div class="cb" style="left:205.8px;top:262.8px">+</div><div class="cb" style="left:271.1px;top:262.8px">Clr</div></div></div></div><div id="bpanel"><div class="btn" style="left:1.0px;top:2.3px;width:20.800px;height:20.500px"></div><div class="btn" style="left:34.6px;top:2.3px;width:173.400px;height:20.800px"></div><div class="btn" style="left:210.2px;top:2.3px;width:174px;height:20.800px"></div><div class="btn" style="left:386.5px;top:2.3px;width:174.800px;height:20.800px;background:linear-gradient(#c5c2be,#d3d0cc 40%,#d6d4d0);border-color:#8f8d89;box-shadow:inset 0 1px 2px rgba(0,0,0,.2)"></div><span class="a" style="left:63.6px;top:5.4px;font-size:12.200px">debian@vbox-squee...</span><span class="a" style="left:239.8px;top:5.4px;font-size:12.200px">debian - Esplorazion...</span><span class="a" style="left:417.4px;top:5.6px">Calcolatrice</span><svg style="left:0;top:0" width="1246" height="25" viewBox="1 677 1246 25">
<use href="#sfolder" x="5" y="683.500" width="15" height="13.200"/>
<rect x="10.900" y="689.700" width="3.200" height="3.600" fill="#dcdccc" stroke="#5f5f4a" stroke-width="1"/><path d="M7.800 688.400 h1.200 M7.800 688.400 v1.200 M17.200 688.400 h-1.200 M17.200 688.400 v1.200 M7.800 694.700 h1.200 M7.800 694.700 v-1.200 M17.200 694.700 h-1.200 M17.200 694.700 v-1.200" stroke="#5f5f4a" stroke-width=".9"/>
<g fill="#c4c1bc"><rect x="27" y="681" width="1" height="1"/><rect x="29.500" y="681" width="1" height="1"/><rect x="27" y="684" width="1" height="1"/><rect x="29.500" y="684" width="1" height="1"/><rect x="27" y="687" width="1" height="1"/><rect x="29.500" y="687" width="1" height="1"/><rect x="27" y="690" width="1" height="1"/><rect x="29.500" y="690" width="1" height="1"/><rect x="27" y="693" width="1" height="1"/><rect x="29.500" y="693" width="1" height="1"/><rect x="27" y="696" width="1" height="1"/><rect x="29.500" y="696" width="1" height="1"/></g>
<rect x="41.800" y="683.500" width="14.800" height="12.600" rx="1" fill="#d3d3d0" stroke="#62635f" stroke-width="1"/>
<rect x="43.600" y="685.300" width="11.200" height="9" fill="#2b3334"/>
<path d="M44.600 686.800 l1.800 1.100 l-1.800 1.100" stroke="#e0eee0" stroke-width=".8" fill="none"/><rect x="47" y="689.800" width="3" height=".8" fill="#e0eee0"/>
<rect x="219.600" y="683.300" width="11.800" height="13.200" rx="1.200" fill="#f1f0ee" stroke="#8f8d88" stroke-width=".9"/>
<rect x="221.300" y="685.200" width="8.400" height="4" fill="#e1dfdc" stroke="#98968f" stroke-width=".7"/>
<rect x="221.300" y="690.600" width="8.400" height="4" fill="#e1dfdc" stroke="#98968f" stroke-width=".7"/>
<path d="M224 687.200 h3 M224 692.600 h3" stroke="#77756f" stroke-width=".8"/>
<rect x="396.400" y="683" width="12.400" height="14" rx="1.800" fill="#575955" stroke="#2e302d" stroke-width=".9"/>
<rect x="397.400" y="684" width="10.400" height="3.800" rx=".8" fill="#34373a"/>
<rect x="398.200" y="684.600" width="8.800" height="2.300" fill="#8ae234"/>
<rect x="398.200" y="688.800" width="8.800" height="7" fill="#8f918c"/>
<path d="M400.400 689.800 h6 M400.400 691.500 h6 M400.400 693.200 h6 M400.400 694.900 h3.400" stroke="#e6e7e3" stroke-width="1.100" stroke-dasharray="1.700 .5"/>
<path d="M398.700 689.800 h1.100 M398.700 691.500 h1.100 M398.700 693.200 h1.100 M398.700 694.900 h1.100" stroke="#5b5d58" stroke-width="1.100"/>
<!-- workspace switcher -->
<rect x="1080" y="679.300" width="165.800" height="20.600" rx="3" fill="#aaa6a2"/>
<path d="M1080 682.300 Q1080 679.300 1083 679.300 H1121.500 V699.900 H1083 Q1080 699.900 1080 696.900 Z" fill="#3b66a9"/>
<path d="M1121.900 679.300 V699.900 M1163 679.300 V699.900 M1204.500 679.300 V699.900" stroke="#e9e7e4" stroke-width="1"/>
<rect x="1081.500" y="687.800" width="5.600" height="7.400" fill="#c6d7f0" stroke="#fff" stroke-width=".8"/>
<rect x="1088.500" y="680.800" width="26" height="18" fill="#7d9fd6" stroke="#fff" stroke-width=".8"/>
<rect x="1094.500" y="682.800" width="5" height="11" fill="#dad8d4" stroke="#777" stroke-width=".6"/>
<rect x="1100.500" y="682" width="20" height="14.400" fill="#84a6db" stroke="#fff" stroke-width=".8"/>
</svg></div><div id="lb"></div><div id="rb"></div><div id="frame"></div></div></body></html>
